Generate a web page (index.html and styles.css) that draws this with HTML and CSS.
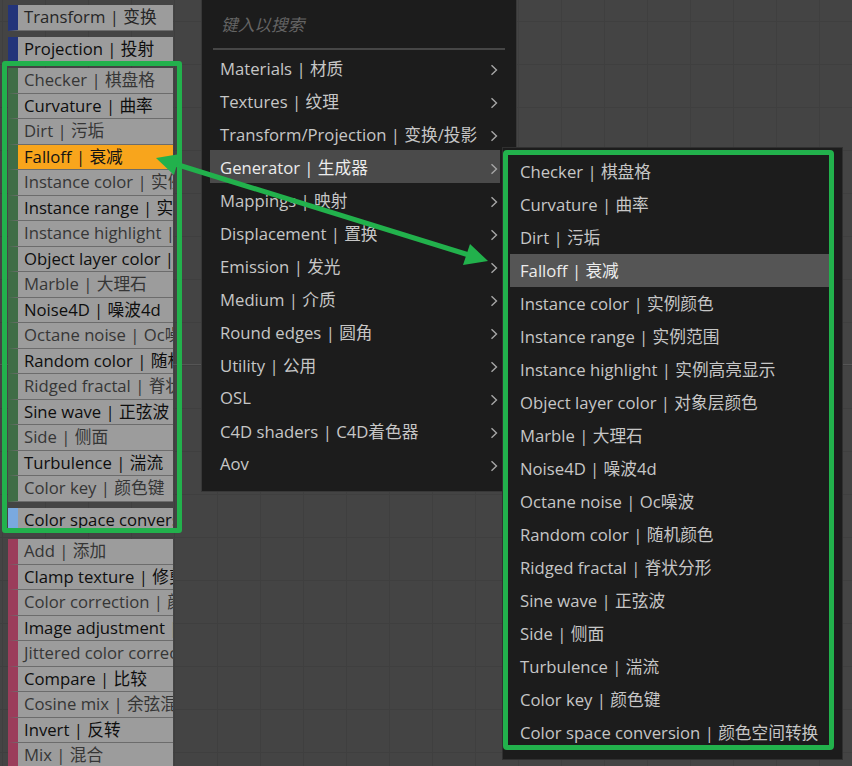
FILE: index.html
```html
<!DOCTYPE html>
<html lang="zh">
<head>
<meta charset="utf-8">
<title>Octane node menu</title>
<link rel="stylesheet" href="styles.css">
</head>
<body>
<div class="canvas">
  <div class="nodes">
    <div class="group g-blue">
      <div class="node">Transform | 变换</div>
    </div>
    <div class="group g-blue">
      <div class="node">Projection | 投射</div>
    </div>
    <div class="group g-green">
      <div class="node">Checker | 棋盘格</div>
      <div class="node">Curvature | 曲率</div>
      <div class="node">Dirt | 污垢</div>
      <div class="node active">Falloff | 衰减</div>
      <div class="node">Instance color | 实例颜色</div>
      <div class="node">Instance range | 实例范围</div>
      <div class="node">Instance highlight | 实例高亮显示</div>
      <div class="node">Object layer color | 对象层颜色</div>
      <div class="node">Marble | 大理石</div>
      <div class="node">Noise4D | 噪波4d</div>
      <div class="node">Octane noise | Oc噪波</div>
      <div class="node">Random color | 随机颜色</div>
      <div class="node">Ridged fractal | 脊状分形</div>
      <div class="node">Sine wave | 正弦波</div>
      <div class="node">Side | 侧面</div>
      <div class="node">Turbulence | 湍流</div>
      <div class="node">Color key | 颜色键</div>
    </div>
    <div class="group g-lightblue">
      <div class="node dark">Color space conversion | 颜色空间转换</div>
    </div>
    <div class="group g-pink">
      <div class="node">Add | 添加</div>
      <div class="node">Clamp texture | 修剪纹理</div>
      <div class="node">Color correction | 颜色校正</div>
      <div class="node">Image adjustment | 图像调整</div>
      <div class="node">Jittered color correction | 抖动颜色校正</div>
      <div class="node">Compare | 比较</div>
      <div class="node">Cosine mix | 余弦混合</div>
      <div class="node">Invert | 反转</div>
      <div class="node">Mix | 混合</div>
    </div>
  </div>

  <div class="menu main-menu">
    <div class="search">键入以搜索</div>
    <div class="sep"></div>
    <ul class="items">
      <li class="item"><span>Materials | 材质</span><svg class="chev" viewBox="0 0 8 12"><path d="M1.5 1.2 L6.5 6 L1.5 10.8"/></svg></li>
      <li class="item"><span>Textures | 纹理</span><svg class="chev" viewBox="0 0 8 12"><path d="M1.5 1.2 L6.5 6 L1.5 10.8"/></svg></li>
      <li class="item"><span>Transform/Projection | 变换/投影</span><svg class="chev" viewBox="0 0 8 12"><path d="M1.5 1.2 L6.5 6 L1.5 10.8"/></svg></li>
      <li class="item hl"><span>Generator | 生成器</span><svg class="chev" viewBox="0 0 8 12"><path d="M1.5 1.2 L6.5 6 L1.5 10.8"/></svg></li>
      <li class="item"><span>Mappings | 映射</span><svg class="chev" viewBox="0 0 8 12"><path d="M1.5 1.2 L6.5 6 L1.5 10.8"/></svg></li>
      <li class="item"><span>Displacement | 置换</span><svg class="chev" viewBox="0 0 8 12"><path d="M1.5 1.2 L6.5 6 L1.5 10.8"/></svg></li>
      <li class="item"><span>Emission | 发光</span><svg class="chev" viewBox="0 0 8 12"><path d="M1.5 1.2 L6.5 6 L1.5 10.8"/></svg></li>
      <li class="item"><span>Medium | 介质</span><svg class="chev" viewBox="0 0 8 12"><path d="M1.5 1.2 L6.5 6 L1.5 10.8"/></svg></li>
      <li class="item"><span>Round edges | 圆角</span><svg class="chev" viewBox="0 0 8 12"><path d="M1.5 1.2 L6.5 6 L1.5 10.8"/></svg></li>
      <li class="item"><span>Utility | 公用</span><svg class="chev" viewBox="0 0 8 12"><path d="M1.5 1.2 L6.5 6 L1.5 10.8"/></svg></li>
      <li class="item"><span>OSL</span><svg class="chev" viewBox="0 0 8 12"><path d="M1.5 1.2 L6.5 6 L1.5 10.8"/></svg></li>
      <li class="item"><span>C4D shaders | C4D着色器</span><svg class="chev" viewBox="0 0 8 12"><path d="M1.5 1.2 L6.5 6 L1.5 10.8"/></svg></li>
      <li class="item"><span>Aov</span><svg class="chev" viewBox="0 0 8 12"><path d="M1.5 1.2 L6.5 6 L1.5 10.8"/></svg></li>
    </ul>
  </div>

  <div class="menu sub-menu">
    <ul class="items">
      <li class="item">Checker | 棋盘格</li>
      <li class="item">Curvature | 曲率</li>
      <li class="item">Dirt | 污垢</li>
      <li class="item hl">Falloff | 衰减</li>
      <li class="item">Instance color | 实例颜色</li>
      <li class="item">Instance range | 实例范围</li>
      <li class="item">Instance highlight | 实例高亮显示</li>
      <li class="item">Object layer color | 对象层颜色</li>
      <li class="item">Marble | 大理石</li>
      <li class="item">Noise4D | 噪波4d</li>
      <li class="item">Octane noise | Oc噪波</li>
      <li class="item">Random color | 随机颜色</li>
      <li class="item">Ridged fractal | 脊状分形</li>
      <li class="item">Sine wave | 正弦波</li>
      <li class="item">Side | 侧面</li>
      <li class="item">Turbulence | 湍流</li>
      <li class="item">Color key | 颜色键</li>
      <li class="item">Color space conversion | 颜色空间转换</li>
    </ul>
  </div>

  <div class="annot box-left"></div>
  <div class="annot box-right"></div>
  <svg class="annot arrow" viewBox="0 0 852 766" width="852" height="766">
    <line x1="172" y1="163" x2="472" y2="256" stroke="#22b14c" stroke-width="5"/>
    <polygon points="156,158 180,154 174,175" fill="#22b14c"/>
    <polygon points="488,261 470,244 463,265" fill="#22b14c"/>
  </svg>
</div>
</body>
</html>
```

FILE: styles.css
```css
* { box-sizing: border-box; }
html, body { margin: 0; padding: 0; }
body {
  width: 852px;
  height: 766px;
  overflow: hidden;
  font-family: "Open Sans", "Noto Sans CJK SC", sans-serif;
  font-size: 16.7px;
}
.canvas {
  position: relative;
  width: 852px;
  height: 766px;
  background-color: #444444;
  background-image:
    linear-gradient(to bottom, transparent 364px, #555555 364px, #555555 365px, transparent 365px),
    linear-gradient(to right, #3f3f3f 1px, transparent 1px),
    linear-gradient(to bottom, #3f3f3f 1px, transparent 1px);
  background-size: 852px 766px, 43px 43px, 43px 43px;
  background-position: 0 0, 2px 0, 0 21px;
  overflow: hidden;
}

/* node list on canvas */
.nodes {
  display: flex;
  flex-direction: column;
  gap: 6px;
  padding: 5px 0 0 8px;
  width: 173px;
}
.group { display: flex; flex-direction: column; }
.node {
  height: 25.5px;
  line-height: 24px;
  background: #9c9c9c;
  border-left: 10px solid #3c6b43;
  border-bottom: 1px solid #6c6c6c;
  padding-left: 6px;
  white-space: nowrap;
  overflow: hidden;
  color: #363636;
}
.node:nth-child(even) { color: #0e0e0e; }
.node.dark { color: #0e0e0e; }
.g-blue .node { border-left-color: #23347a; color: #262626; }
.g-blue + .g-blue .node { color: #0e0e0e; }
.g-green .node { border-left-color: #3f6d46; }
.g-lightblue .node { border-left-color: #7aa9df; }
.g-pink .node { border-left-color: #9b3d5b; }
.node.active { background: #f8a51c; color: #141414; }

/* popup menus */
.menu {
  position: absolute;
  background: #1c1c1c;
  border: 1px solid #383838;
  color: #c6c6c6;
}
.items { list-style: none; margin: 0; padding: 0; }
.item {
  height: 33px;
  display: flex;
  align-items: center;
  justify-content: space-between;
  padding-left: 10px;
  white-space: nowrap;
}
.item.hl { color: #ececec; }
.main-menu {
  left: 201px;
  top: -1px;
  width: 316px;
  height: 493px;
}
.main-menu .search {
  height: 48px;
  padding: 12px 0 0 19px;
  color: #646464;
  font-style: italic;
}
.main-menu .sep {
  height: 2px;
  margin: 0 11px;
  background: #464646;
}
.main-menu .items { margin: 1px 16px 0 8px; }
.main-menu .item { padding-right: 2px; }
.main-menu .item.hl { background: #4a4a4a; }
.chev {
  width: 8px;
  height: 12px;
  margin-top: 5px;
  fill: none;
  stroke: #a6a6a6;
  stroke-width: 1.4;
}
.sub-menu {
  left: 502px;
  top: 147px;
  width: 341px;
  height: 613px;
  border-color: #303030;
}
.sub-menu .items { padding: 6.5px 0 0 7px; width: 327px; }
.sub-menu .item.hl { background: #555555; }

/* annotations */
.annot { position: absolute; pointer-events: none; }
.box-left {
  left: 2px;
  top: 61px;
  width: 180px;
  height: 472px;
  border: 5px solid #22b14c;
  border-radius: 3px;
}
.box-right {
  left: 503px;
  top: 150px;
  width: 331px;
  height: 600px;
  border: 5px solid #22b14c;
  border-radius: 4px;
}
.arrow { left: 0; top: 0; }
```
